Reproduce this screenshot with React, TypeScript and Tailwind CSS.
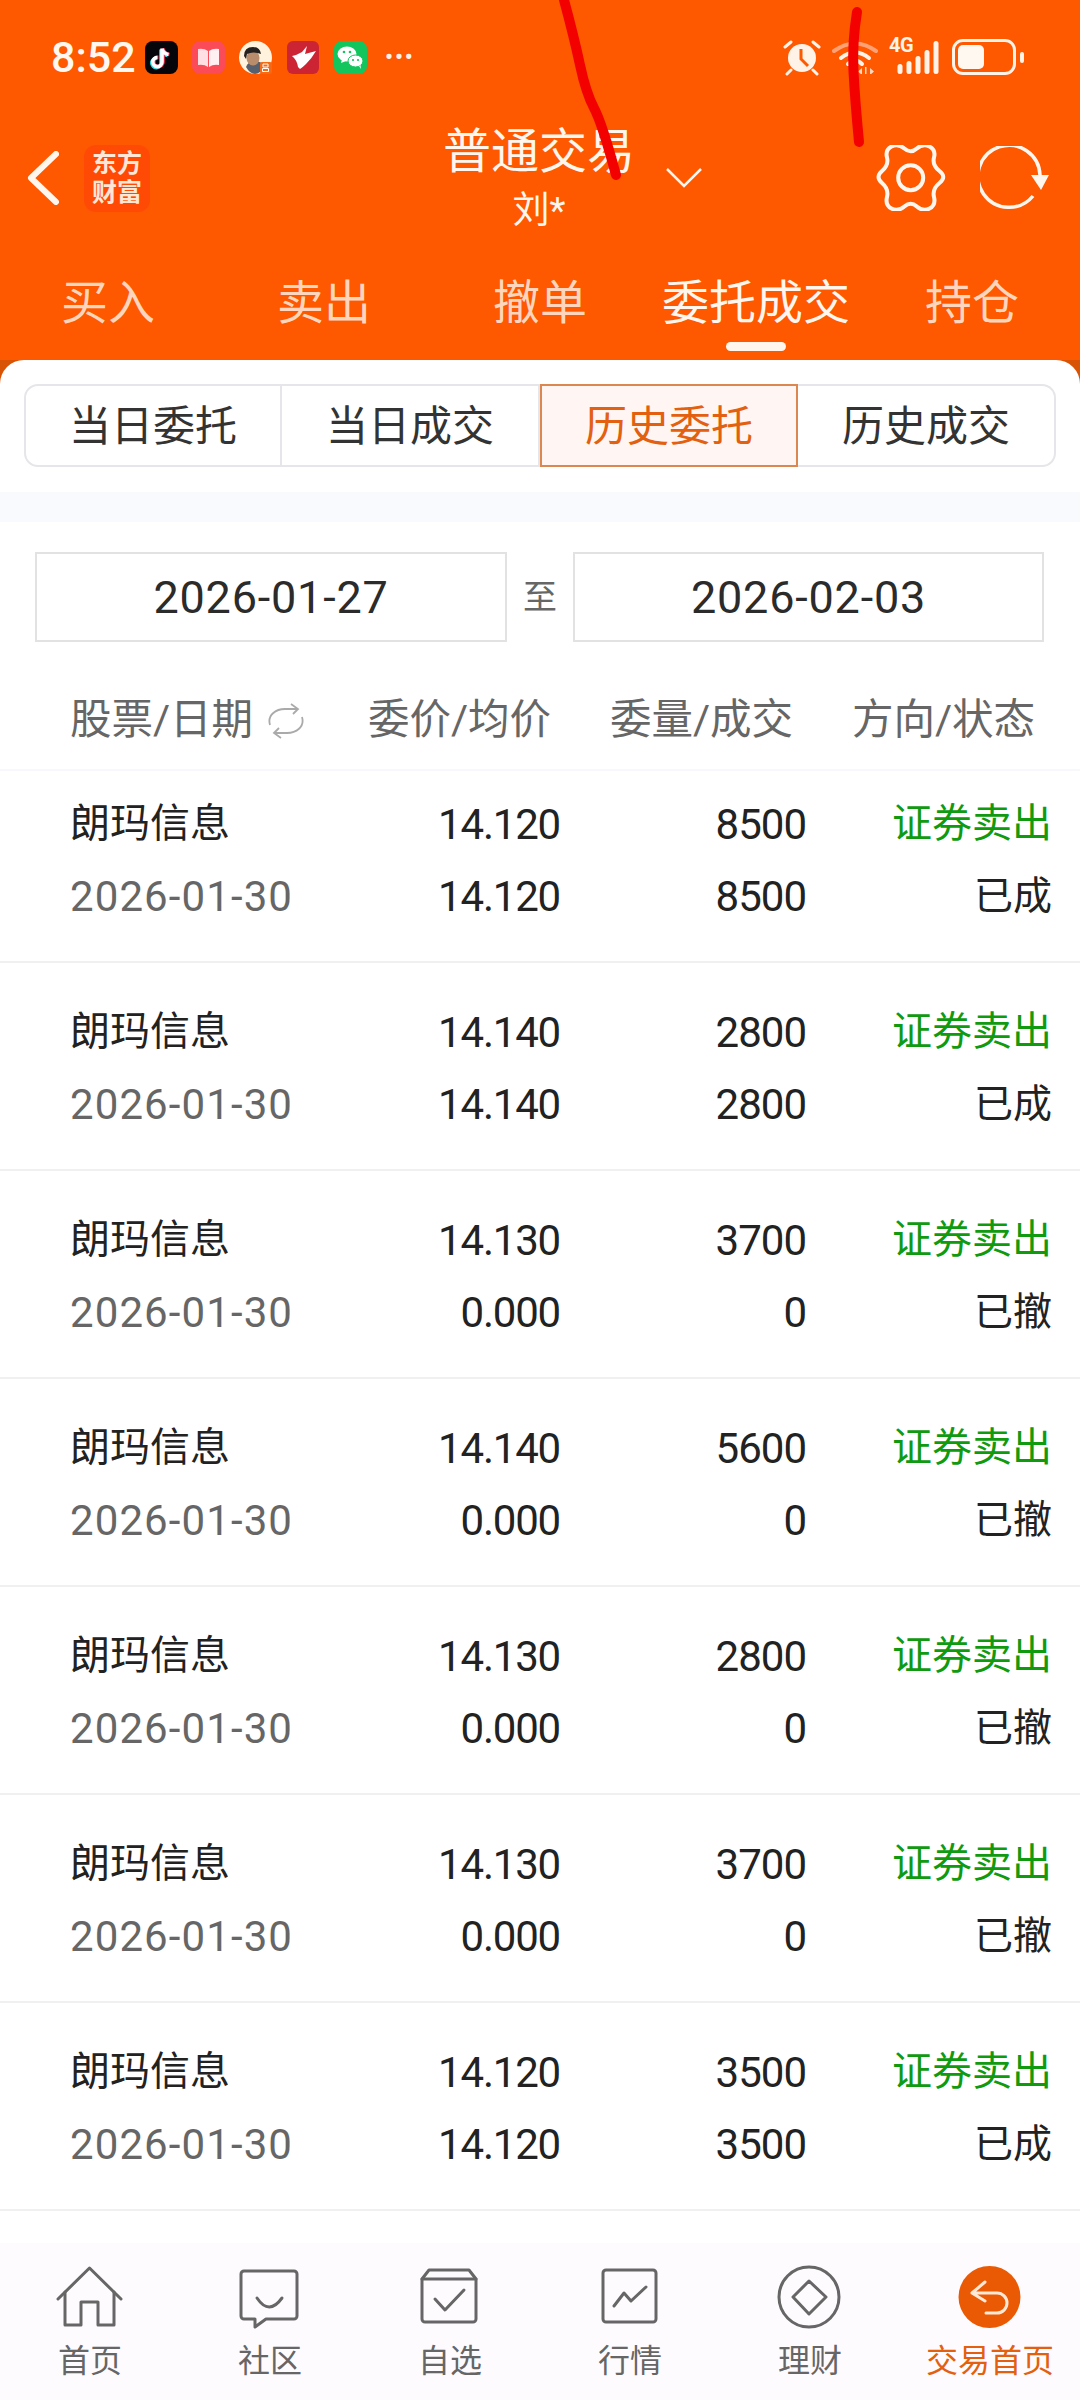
import React from "react";

const gearPts: [number, number][] = [
  [34.7, 9], [47, -2], [60, 5], [56, 20], [71, 32], [56, 44], [60, 60], [47, 67],
  [34.7, 56], [22, 67], [9, 60], [13, 44], [-1, 32], [13, 20], [9, 5], [22, -2],
];
function smooth(p: [number, number][], closed = true) {
  const mid = (a: [number, number], b: [number, number]) => [(a[0] + b[0]) / 2, (a[1] + b[1]) / 2];
  if (!closed) {
    let o = `M${p[0][0]} ${p[0][1]}`;
    for (let i = 1; i < p.length - 1; i++) {
      const m = i === p.length - 2 ? p[p.length - 1] : mid(p[i], p[i + 1]);
      o += ` Q${p[i][0]} ${p[i][1]} ${m[0]} ${m[1]}`;
    }
    return o;
  }
  const s = mid(p[p.length - 1], p[0]);
  let d = `M${s[0]} ${s[1]}`;
  p.forEach((c, i) => {
    const m = mid(c, p[(i + 1) % p.length]);
    d += ` Q${c[0]} ${c[1]} ${m[0]} ${m[1]}`;
  });
  return d + "Z";
}

const rows = [
  ["14.120", "8500", "14.120", "8500", "已成"],
  ["14.140", "2800", "14.140", "2800", "已成"],
  ["14.130", "3700", "0.000", "0", "已撤"],
  ["14.140", "5600", "0.000", "0", "已撤"],
  ["14.130", "2800", "0.000", "0", "已撤"],
  ["14.130", "3700", "0.000", "0", "已撤"],
  ["14.120", "3500", "14.120", "3500", "已成"],
];

function AppIcons() {
  return (
    <div className="flex items-center gap-[14px] ml-[13px]">
      <svg width="33" height="33" viewBox="0 0 33 33">
        <rect width="33" height="33" rx="8" fill="#05050a" />
        <g fill="none" strokeWidth="3.6">
          <path d="M17 7.5V21a4.6 4.6 0 1 1-4.6-4.6M17 7.5q1 5 6.5 6" stroke="#25e0e6" transform="translate(-1 1)" />
          <path d="M17 7.5V21a4.6 4.6 0 1 1-4.6-4.6M17 7.5q1 5 6.5 6" stroke="#fb2c55" transform="translate(1 0)" />
          <path d="M17 7.5V21a4.6 4.6 0 1 1-4.6-4.6M17 7.5q1 5 6.5 6" stroke="#ffffff" />
        </g>
      </svg>
      <svg width="33" height="33" viewBox="0 0 33 33">
        <rect width="33" height="33" rx="8" fill="#fb4a58" />
        <path d="M6 8q6-1 10 2v16q-4-3-10-2z" fill="#ffdfe3" />
        <path d="M27 8q-6-1-10 2v16q4-3 10-2z" fill="#fff1f2" />
      </svg>
      <svg width="33" height="33" viewBox="0 0 33 33">
        <circle cx="16.5" cy="16.5" r="16.5" fill="#fff3dd" />
        <path d="M7 26q2-6 9-6t9 6q-4 7-9 7t-9-7z" fill="#57606e" />
        <ellipse cx="14" cy="17" rx="6.5" ry="7.5" fill="#b98d6b" />
        <path d="M5 15q0-9 9-9 7 0 8 7-8-3-14 0l-1 5z" fill="#24211f" />
        <rect x="21" y="21" width="12" height="12" rx="2" fill="#f56a12" />
        <path d="M24 23h5v3h-5zM23.500 27.500h6v3h-6z" fill="none" stroke="#fff" strokeWidth="1" />
      </svg>
      <svg width="33" height="33" viewBox="0 0 33 33" className="ml-[1px]">
        <rect width="32" height="33" rx="6" fill="#cd2433" />
        <path d="M5 15q5-1 10-4l5-6-2 8 11-3q-4 7-10 13-3 3-6 5-1-1-2-2-1-7-6-11z" fill="#fff" />
      </svg>
      <svg width="33" height="33" viewBox="0 0 33 33">
        <rect width="33" height="33" rx="8" fill="#12c55c" />
        <ellipse cx="13" cy="13" rx="9.500" ry="7.500" fill="#fff" />
        <path d="M8 18l-1 4 5-2z" fill="#fff" />
        <ellipse cx="21.500" cy="20" rx="7.500" ry="6" fill="#fff" stroke="#12c55c" strokeWidth="1" />
        <path d="M25 25l2 3-.500-4z" fill="#fff" />
        <circle cx="10" cy="11" r="1.300" fill="#12c55c" />
        <circle cx="16" cy="11" r="1.300" fill="#12c55c" />
        <circle cx="19" cy="19" r="1.100" fill="#12c55c" />
        <circle cx="24" cy="19" r="1.100" fill="#12c55c" />
      </svg>
    </div>
  );
}

function StatusRight() {
  const c = "#fff3e8";
  return (
    <div className="flex items-center ml-auto mr-[56px]">
      <svg width="38" height="38" viewBox="0 0 38 38">
        <circle cx="19" cy="20" r="14" fill={c} />
        <path d="M18 11v10l7 7" fill="none" stroke="#fe5800" strokeWidth="3" />
        <path d="M2 9l6-5M36 9l-6-5M8 32l-4 4M30 32l4 4" stroke={c} strokeWidth="3" strokeLinecap="round" />
      </svg>
      <svg width="46" height="34" viewBox="0 0 46 34" className="ml-[11px]">
        <path d="M2 11Q23-4 44 11" fill="none" stroke="#ffa175" strokeWidth="4" strokeLinecap="round" />
        <path d="M9 18Q23 7 37 18" fill="none" stroke={c} strokeWidth="4" strokeLinecap="round" />
        <path d="M16 24Q23 17 30 24" fill="none" stroke={c} strokeWidth="4" strokeLinecap="round" />
        <circle cx="22" cy="30" r="3" fill={c} />
        <path d="M30 28l-4 3.500 4 3.500zM38 28l4 3.500-4 3.500zM33 27h1.500v8H33z" fill="#ffd7bf" />
      </svg>
      <div className="relative w-[52px] h-[36px] ml-[11px]">
        <span className="absolute left-0 top-[-4px] text-[20px] leading-[20px] font-bold text-[#fff3e8] font-['Roboto'] tracking-[-0.5px]">4G</span>
        <svg width="52" height="36" viewBox="0 0 52 36" className="absolute left-0 top-0">
          {[
            [11, 25, 10],
            [20, 22, 13],
            [29, 17, 18],
            [38, 11, 24],
            [47, 2, 33],
          ].map(([x, y, h]) => (
            <rect key={x} x={x - 2.5} y={y} width="5" height={h} rx="2.500" fill={c} />
          ))}
        </svg>
      </div>
      <div className="ml-[11px] w-[64px] h-[36px] rounded-[11px] border-[3px] border-[#fff3e8] p-[3px] flex">
        <div className="w-[26px] h-full rounded-[5px] bg-[#fff8f0]" />
      </div>
      <div className="w-[4px] h-[11px] ml-[4px] rounded-[2px] bg-[#fff3e8]" />
    </div>
  );
}

function Row({ r, first }: { r: string[]; first: boolean }) {
  return (
    <div className={`border-b-2 border-[#f0f0f0] pl-[70px] pr-[28px] grid grid-cols-[244px_246px_246px_246px] grid-rows-[72px_72px] items-center ${first ? "h-[192px] pt-[17px]" : "h-[208px] pt-[33px]"}`}>
      <div className="text-[40px] text-[#222222]">朗玛信息</div>
      <div className="text-[42px] tracking-[-1.2px] text-right text-[#222222]">{r[0]}</div>
      <div className="text-[42px] tracking-[-1px] text-right text-[#222222]">{r[1]}</div>
      <div className="text-[40px] text-right text-[#0f9a0f]">证券卖出</div>
      <div className="text-[42px] tracking-[1.1px] text-[#666666]">2026-01-30</div>
      <div className="text-[42px] tracking-[-1.2px] text-right text-[#222222]">{r[2]}</div>
      <div className="text-[42px] tracking-[-1px] text-right text-[#222222]">{r[3]}</div>
      <div className="text-[39px] text-right text-[#222222]">{r[4]}</div>
    </div>
  );
}

function NavItem({ label, active, children }: { label: string; active?: boolean; children: React.ReactNode }) {
  return (
    <div className="flex flex-col items-center">
      <svg width="72" height="72" viewBox="0 0 72 72" fill="none" stroke="#666666" strokeWidth="3" strokeLinejoin="round" strokeLinecap="round">
        {children}
      </svg>
      <div className={`mt-[4px] text-[32px] leading-[48px] ${active ? "text-[#e2600f]" : "text-[#666666]"}`}>{label}</div>
    </div>
  );
}

export default function App() {
  return (
    <div className="relative w-[1080px] h-[2400px] overflow-hidden flex flex-col bg-white font-['Roboto','Noto_Sans_CJK_SC',sans-serif]">
      <div className="h-[360px] shrink-0 bg-[#fe5800] flex flex-col">
        <div className="h-[114px] shrink-0 flex items-center pl-[51px] text-[#fff8f0]">
          <span className="text-[43px] font-medium w-[81px]">8:52</span>
          <AppIcons />
          <span className="ml-[18px] text-[#fff3e8] text-[22px] font-bold tracking-[2px] leading-none">•••</span>
          <StatusRight />
        </div>

        <div className="h-[128px] shrink-0 flex items-center pl-[27px]">
          <svg width="32" height="54" viewBox="0 0 32 54" fill="none" stroke="#fff6ee" strokeWidth="6" strokeLinecap="round" strokeLinejoin="round">
            <path d="M29 3 4 27l25 24" />
          </svg>
          <div className="ml-[25px] w-[66px] h-[67px] rounded-[12px] bg-[#ff4a05] flex flex-col items-center justify-center text-[#ffe7d8] text-[25px] leading-[29px] font-bold">
            <span>东方</span>
            <span>财富</span>
          </div>
          <div className="ml-[293px] w-[192px] flex flex-col items-center text-[#fff6ee] mt-[7px]">
            <span className="text-[48px] leading-[58px]">普通交易</span>
            <span className="text-[37px] leading-[59px]">刘*</span>
          </div>
          <svg width="36" height="20" viewBox="0 0 36 20" fill="none" stroke="#fff6ee" strokeWidth="2.500" className="ml-[31px]">
            <path d="M1 1l17 17L35 1" />
          </svg>
          <svg width="70" height="66" viewBox="0 0 70 66" fill="none" stroke="#fff6ee" strokeWidth="4" className="ml-[174px]">
            <path d={smooth(gearPts)} />
            <circle cx="34.700" cy="32.700" r="12.500" />
          </svg>
          <svg width="70" height="64" viewBox="0 0 70 64" fill="none" className="ml-[34px]">
            <path d="M53 50A31 31 0 1 1 60 29" stroke="#fff6ee" strokeWidth="3.500" />
            <path d="M51 29h18l-8 15z" fill="#fff6ee" />
          </svg>
        </div>

        <div className="flex-1 grid grid-cols-5 pt-[31px]">
          {["买入", "卖出", "撤单", "委托成交", "持仓"].map((t) => (
            <div key={t} className="flex flex-col items-center">
              <span className={`text-[47px] leading-[60px] ${t === "委托成交" ? "text-[#fff6ee]" : "text-[#ffd6bd]"}`}>{t}</span>
              {t === "委托成交" && <div className="mt-[9px] w-[60px] h-[9px] rounded-full bg-[#fff6ee]" />}
            </div>
          ))}
        </div>
      </div>

      <div className="flex-1 flex flex-col bg-[#d95305]">
        <div className="flex-1 flex flex-col bg-white rounded-t-[24px]">
          <div className="pt-[24px] px-[24px]">
            <div className="h-[83px] grid grid-cols-4 text-[42px]">
              <div className="flex items-center justify-center pt-[2px] border-2 border-[#e6e6ea] rounded-l-[14px] text-[#333333]">当日委托</div>
              <div className="flex items-center justify-center pt-[2px] border-y-2 border-r-2 border-[#e6e6ea] text-[#333333]">当日成交</div>
              <div className="flex items-center justify-center pt-[2px] border-y-2 border-r-2 border-l-2 border-[#dc8750] bg-[#fff6f4] text-[#e2600f]">历史委托</div>
              <div className="flex items-center justify-center pt-[2px] border-y-2 border-r-2 border-[#e6e6ea] rounded-r-[14px] text-[#333333]">历史成交</div>
            </div>
          </div>

          <div className="mt-[25px] h-[30px] bg-[#f8fafe]" />

          <div className="pt-[30px] pl-[35px] pr-[36px] flex items-center">
            <div className="w-[472px] h-[90px] pt-[2px] border-2 border-[#e2e2e2] flex items-center justify-center text-[45px] tracking-[0.8px] text-[#2b2b2b]">2026-01-27</div>
            <div className="flex-1 text-center text-[34px] text-[#666666]">至</div>
            <div className="w-[471px] h-[90px] pt-[2px] border-2 border-[#e2e2e2] flex items-center justify-center text-[45px] tracking-[0.8px] text-[#2b2b2b]">2026-02-03</div>
          </div>

          <div className="h-[129px] pt-[30px] pl-[70px] pr-[45px] flex items-center text-[41.5px] text-[#666666] border-b-2 border-[#f6f8fc] whitespace-nowrap">
            <div className="flex-1 flex items-center">
              <span>股票/日期</span>
              <svg width="38" height="36" viewBox="0 0 38 36" fill="none" stroke="#aaaaaa" strokeWidth="1.800" className="ml-[14px]">
                <path d="M3 22C0 12 9 6 18 6h13M24 1l7 5-5 5" />
                <path d="M35 14c3 10-6 16-15 16H7M14 35l-7-5 5-5" />
              </svg>
            </div>
            <div className="w-[242px] text-right">委价/均价</div>
            <div className="w-[242px] text-right">委量/成交</div>
            <div className="w-[242px] text-right">方向/状态</div>
          </div>

          {rows.map((r, i) => (
            <Row key={i} r={r} first={i === 0} />
          ))}

          <div className="flex-1" />

          <div className="h-[157px] shrink-0 bg-[#fefbfe] grid grid-cols-6 pt-[18px]">
            <NavItem label="首页">
              <path d="M4 38 35.500 7 67 38" />
              <path d="M11 31v33h16V41h17v23h16V31" />
            </NavItem>
            <NavItem label="社区">
              <path d="M10 10h50a3 3 0 0 1 3 3v42a3 3 0 0 1-3 3H32l-11 8v-8H10a3 3 0 0 1-3-3V13a3 3 0 0 1 3-3z" />
              <path d="M23 37q12 18 25 0" />
            </NavItem>
            <NavItem label="自选">
              <path d="M15 9h40l7 9v40a3 3 0 0 1-3 3H11a3 3 0 0 1-3-3V18z" />
              <path d="M8 18h54" />
              <path d="M21 38l10 11 19-20" />
            </NavItem>
            <NavItem label="行情">
              <rect x="9" y="9" width="53" height="52" rx="3" />
              <path d="M20 45 30 32l7 8 15-14" />
            </NavItem>
            <NavItem label="理财">
              <circle cx="35" cy="36" r="30" />
              <path d="M35 20 52 36 35 53 19 36z" />
            </NavItem>
            <NavItem label="交易首页" active>
              <circle cx="35.500" cy="36" r="31" fill="#ea5a04" stroke="none" />
              <path d="M31 21 18 32l13 8M18 32h25a10 10 0 0 1 0 20H32" stroke="#ffe8d6" />
            </NavItem>
          </div>
        </div>
      </div>

      <svg width="1080" height="200" viewBox="0 0 1080 200" fill="none" className="absolute left-0 top-0 pointer-events-none">
        <path d={smooth([[564, 0], [574, 37], [586, 93], [602, 123], [616, 175]], false)} stroke="#f30000" strokeWidth="10" strokeLinecap="round" strokeLinejoin="round" />
        <path d={smooth([[857, 12], [852, 43], [855, 100], [859, 142]], false)} stroke="#f30000" strokeWidth="10" strokeLinecap="round" strokeLinejoin="round" />
      </svg>
    </div>
  );
}
